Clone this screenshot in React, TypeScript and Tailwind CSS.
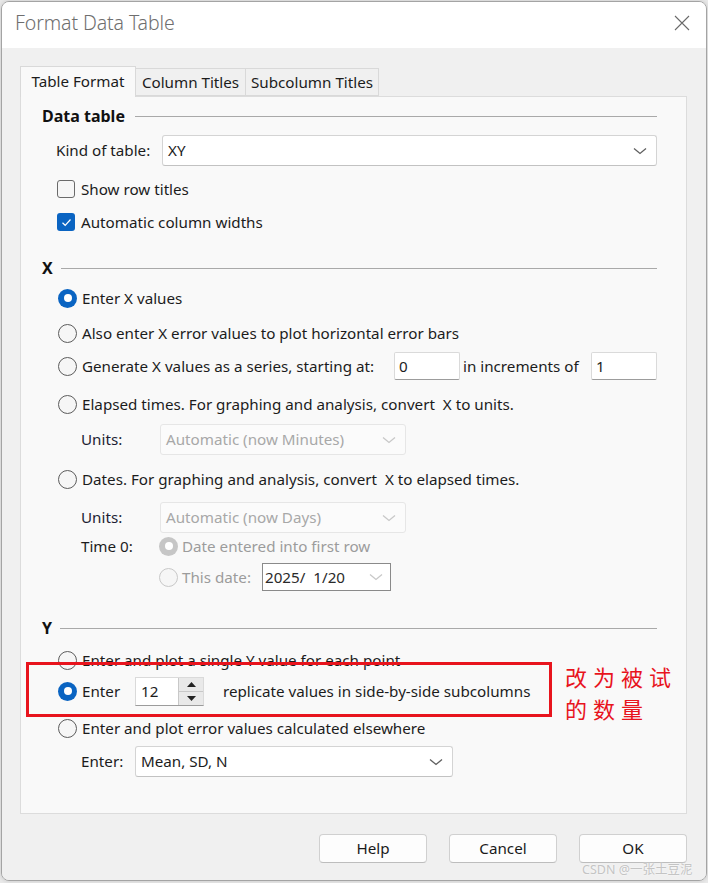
import React from "react";

function Chevron({ disabled }: { disabled?: boolean }) {
  return (
    <svg width="14" height="8" viewBox="0 0 14 8" className="shrink-0">
      <path
        d="M1 1.5 L7 6.5 L13 1.5"
        fill="none"
        stroke={disabled ? "#c8c8c8" : "#606060"}
        strokeWidth="1.3"
      />
    </svg>
  );
}

function Select({ value, w, disabled }: { value: string; w: string; disabled?: boolean }) {
  return (
    <div
      className={
        "flex h-[31px] items-center justify-between rounded-[3px] border pl-[5px] pr-[9px] " +
        w +
        (disabled
          ? " border-[#e6e6e6] bg-[#fbfbfb] text-[#a8a8a8]"
          : " border-[#d4d4d4] border-b-[#c2c2c2] bg-white text-[#1c1c1c]")
      }
    >
      <span>{value}</span>
      <Chevron disabled={disabled} />
    </div>
  );
}

function Radio({ checked, disabled }: { checked?: boolean; disabled?: boolean }) {
  if (checked) {
    return (
      <span
        className={
          "flex h-[19px] w-[19px] shrink-0 items-center justify-center rounded-full " +
          (disabled ? "bg-[#c6c6c6]" : "bg-[#0a64c2]")
        }
      >
        <span className="h-[8px] w-[8px] rounded-full bg-white" />
      </span>
    );
  }
  return (
    <span
      className={
        "h-[19px] w-[19px] shrink-0 rounded-full border bg-[#f6f6f6] " +
        (disabled ? "border-[#c8c8c8]" : "border-[#5c5c5c]")
      }
    />
  );
}

function Checkbox({ checked }: { checked?: boolean }) {
  if (checked) {
    return (
      <span className="flex h-[18px] w-[18px] shrink-0 items-center justify-center rounded-[3px] bg-[#0a64c2]">
        <svg width="11" height="9" viewBox="0 0 11 9">
          <path d="M1.5 4.8 L4.2 7.3 L9.5 1.5" fill="none" stroke="#fff" strokeWidth="1.2" />
        </svg>
      </span>
    );
  }
  return <span className="h-[18px] w-[18px] shrink-0 rounded-[3px] border border-[#6a6a6a] bg-[#f6f6f6]" />;
}

function Header({ title, line }: { title: string; line: string }) {
  return (
    <div className="flex h-[24px] items-center">
      <span className="text-[16px] font-bold text-[#111]">{title}</span>
      <div className={"h-px flex-1 bg-[#a9a9a9] " + line} />
    </div>
  );
}

function TextBox({ value, w }: { value: string; w: string }) {
  return (
    <div
      className={
        "flex h-[28px] items-center rounded-[2px] border border-[#dadada] border-b-[#9c9c9c] bg-white pl-[4px] " + w
      }
    >
      {value}
    </div>
  );
}

function Button({ label }: { label: string }) {
  return (
    <div className="flex h-[29px] w-[108px] items-center justify-center rounded-[4px] border border-[#d0d0d0] border-b-[#bdbdbd] bg-[#fdfdfd] text-[#1a1a1a]">
      {label}
    </div>
  );
}

export default function App() {
  return (
    <div className="relative h-[883px] w-[708px] overflow-hidden bg-[#e9e9e9] font-['Noto_Sans',sans-serif] text-[15.2px] text-[#1c1c1c]">
      <div className="ml-[1px] mt-[1px] flex h-[880px] w-[706px] flex-col overflow-hidden rounded-[8px] border border-[#a4a4a4] shadow-[0_0_4px_rgba(0,0,0,0.15)]">
        <div className="flex h-[46px] items-center justify-between bg-white pb-[4px] pl-[13px] pr-[16px]">
          <span className="text-[19.5px] font-light tracking-[-0.1px] text-[#6e6e6e]">Format Data Table</span>
          <svg width="16" height="16" viewBox="0 0 16 16">
            <path d="M1 1 L15 15 M15 1 L1 15" stroke="#6a6a6a" strokeWidth="1.1" />
          </svg>
        </div>

        <div className="flex-1 bg-[#f0f0f0] pl-[18px] pr-[19px]">
          <div className="mt-[17px] flex h-[31px] items-end">
            <div className="relative z-10 -mb-px flex h-[31px] w-[116px] items-center justify-center border border-b-0 border-[#d9d9d9] bg-[#f9f9f9] pb-[2px]">
              Table Format
            </div>
            <div className="flex h-[28px] w-[110px] items-center justify-center border border-l-0 border-[#d9d9d9] bg-[#f0f0f0]">
              Column Titles
            </div>
            <div className="flex h-[28px] w-[133px] items-center justify-center border border-l-0 border-[#d9d9d9] bg-[#f0f0f0]">
              Subcolumn Titles
            </div>
          </div>

          <div className="h-[718px] border border-[#dcdcdc] bg-[#f9f9f9] pl-[21px] pr-[29px]">
            <div className="mt-[7px]">
              <Header title="Data table" line="ml-[10px]" />
            </div>
            <div className="ml-[14px] mt-[7px] flex items-center">
              <span className="w-[106px]">Kind of table:</span>
              <Select value="XY" w="flex-1" />
            </div>
            <div className="ml-[15px] mt-[11px] flex h-[24px] items-center gap-[6px]">
              <Checkbox />
              <span>Show row titles</span>
            </div>
            <div className="ml-[15px] mt-[9px] flex h-[24px] items-center gap-[6px]">
              <Checkbox checked />
              <span>Automatic column widths</span>
            </div>

            <div className="mt-[22px]">
              <Header title="X" line="ml-[8px]" />
            </div>
            <div className="ml-[16px] mt-[6px] flex h-[24px] items-center gap-[5px]">
              <Radio checked />
              <span>Enter X values</span>
            </div>
            <div className="ml-[16px] mt-[11px] flex h-[24px] items-center gap-[5px]">
              <Radio />
              <span>Also enter X error values to plot horizontal error bars</span>
            </div>
            <div className="ml-[16px] mt-[7px] flex h-[28px] items-center">
              <Radio />
              <span className="ml-[5px] w-[312px]">Generate X values as a series, starting at:</span>
              <TextBox value="0" w="w-[66px]" />
              <span className="ml-[3px] w-[128px]">in increments of</span>
              <TextBox value="1" w="w-[66px]" />
            </div>
            <div className="ml-[16px] mt-[12px] flex h-[24px] items-center gap-[5px]">
              <Radio />
              <span>Elapsed times. For graphing and analysis, convert&nbsp; X to units.</span>
            </div>
            <div className="ml-[39px] mt-[8px] flex items-center">
              <span className="w-[79px] text-[#1d1d33]">Units:</span>
              <Select value="Automatic (now Minutes)" w="w-[246px]" disabled />
            </div>
            <div className="ml-[16px] mt-[12px] flex h-[24px] items-center gap-[5px]">
              <Radio />
              <span>Dates. For graphing and analysis, convert&nbsp; X to elapsed times.</span>
            </div>
            <div className="ml-[39px] mt-[11px] flex items-center">
              <span className="w-[79px] text-[#1d1d33]">Units:</span>
              <Select value="Automatic (now Days)" w="w-[246px]" disabled />
            </div>
            <div className="ml-[39px] mt-[1px] flex h-[24px] items-center">
              <span className="w-[78px]">Time 0:</span>
              <Radio checked disabled />
              <span className="ml-[4px] text-[#9c9c9c]">Date entered into first row</span>
            </div>
            <div className="ml-[117px] mt-[5px] flex h-[28px] items-center">
              <Radio disabled />
              <span className="ml-[4px] w-[80px] text-[#9c9c9c]">This date:</span>
              <div className="flex h-[28px] w-[129px] items-center justify-between border border-[#8a8a8a] bg-white pl-[2px] pr-[7px] text-[#2a2a2a]">
                <span>2025/&nbsp; 1/20</span>
                <Chevron disabled />
              </div>
            </div>

            <div className="mt-[25px]">
              <Header title="Y" line="ml-[8px]" />
            </div>
            <div className="ml-[16px] mt-[8px] flex h-[24px] items-center gap-[5px]">
              <Radio />
              <span>Enter and plot a single Y value for each point</span>
            </div>
            <div className="ml-[16px] mt-[5px] flex h-[28px] items-center">
              <Radio checked />
              <span className="ml-[5px] w-[53px]">Enter</span>
              <div className="flex h-[29px] w-[69px] items-stretch border border-[#dadada] border-b-[#9c9c9c] bg-white">
                <span className="flex flex-1 items-center pl-[5px]">12</span>
                <div className="flex w-[25px] flex-col border-l border-[#c8c8c8] bg-[#e9e9e9]">
                  <div className="flex flex-1 items-center justify-center border-b border-[#c8c8c8]">
                    <svg width="9" height="5" viewBox="0 0 9 5">
                      <path d="M0 5 L4.5 0 L9 5 Z" fill="#222" />
                    </svg>
                  </div>
                  <div className="flex flex-1 items-center justify-center">
                    <svg width="9" height="5" viewBox="0 0 9 5">
                      <path d="M0 0 L4.5 5 L9 0 Z" fill="#222" />
                    </svg>
                  </div>
                </div>
              </div>
              <span className="ml-[19px]">replicate values in side-by-side subcolumns</span>
            </div>
            <div className="ml-[16px] mt-[11px] flex h-[24px] items-center gap-[5px]">
              <Radio />
              <span>Enter and plot error values calculated elsewhere</span>
            </div>
            <div className="ml-[39px] mt-[6px] flex items-center">
              <span className="w-[54px]">Enter:</span>
              <Select value="Mean, SD, N" w="w-[318px]" />
            </div>
          </div>

          <div className="mt-[20px] flex justify-end gap-[22px]">
            <Button label="Help" />
            <Button label="Cancel" />
            <Button label="OK" />
          </div>
        </div>
      </div>

      {/* annotation */}
      <div className="absolute left-[26px] top-[662px] h-[55px] w-[526px] border-[3px] border-[#e8141d]" />
      <div className="absolute left-[565px] top-[660px] font-['Noto_Sans_CJK_SC',sans-serif] text-[22px] leading-[32px] tracking-[6px] text-[#e8141d]">
        <div>改为被试</div>
        <div>的数量</div>
      </div>
      <div className="absolute left-[582px] top-[861px] font-['Noto_Sans','Noto_Sans_CJK_SC',sans-serif] text-[12.5px] text-[#c4c4c4] [text-shadow:0_0_2px_#fff]">
        CSDN @一张土豆泥
      </div>
    </div>
  );
}
